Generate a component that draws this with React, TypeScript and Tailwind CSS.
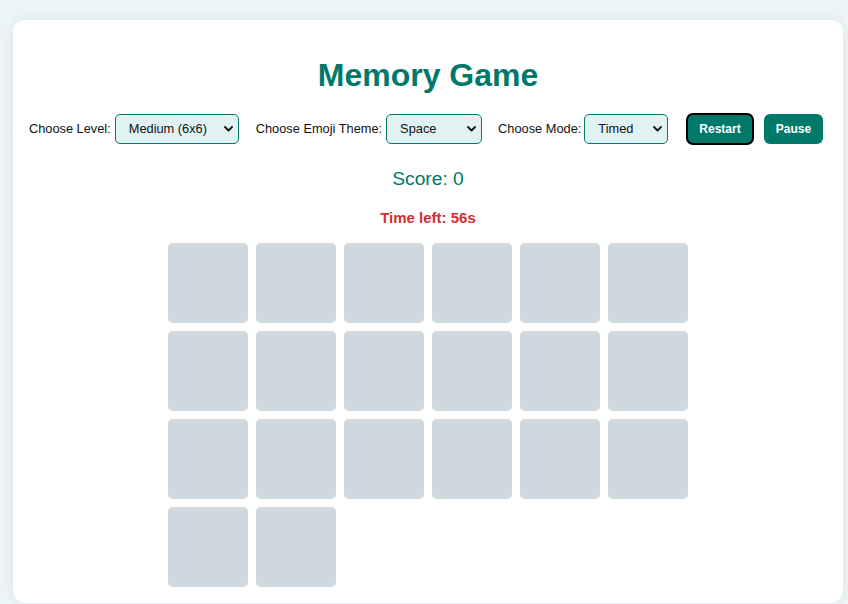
import { useState } from 'react';

const levels = ['Easy (4x4)', 'Medium (6x6)', 'Hard (8x8)'];
const themes = ['Animals', 'Food', 'Space', 'Faces'];
const modes = ['Classic', 'Timed'];

function Dropdown({ value, options, width, onChange }: { value: string; options: string[]; width: string; onChange: (v: string) => void }) {
  return (
    <div className={`relative ${width}`}>
      <select
        value={value}
        onChange={e => onChange(e.target.value)}
        className="h-[30px] w-full appearance-none rounded-[5px] border border-[#00796b] bg-[#e0f2f1] pl-[13px] pr-6 text-[12.8px] text-[#111] outline-none"
      >
        {options.map(o => (
          <option key={o} value={o}>{o}</option>
        ))}
      </select>
      <svg
        className="pointer-events-none absolute right-[6px] top-[12px]"
        width="9"
        height="6"
        viewBox="0 0 9 6"
        fill="none"
      >
        <path d="M1 1l3.5 3.5L8 1" stroke="#111" strokeWidth="1.8" strokeLinecap="round" strokeLinejoin="round" />
      </svg>
    </div>
  );
}

export default function App() {
  const [level, setLevel] = useState('Medium (6x6)');
  const [theme, setTheme] = useState('Space');
  const [mode, setMode] = useState('Timed');
  const cards = Array.from({ length: 20 }, (_, i) => i);

  return (
    <div className="h-[604px] overflow-hidden bg-[#edf4f8] pt-[20px] font-['Liberation_Sans',Arial,sans-serif]">
      <div className="ml-[13px] flex h-[583px] w-[830px] flex-col items-center rounded-[12px] bg-white pt-[37px] shadow-[0_0_12px_rgba(0,0,0,0.07)]">
        <h1 className="h-[37px] text-[32px] font-bold leading-[37px] text-[#00796b]">Memory Game</h1>

        <div className="mt-[19px] flex h-[32px] items-center pr-[4px] text-[12.8px] text-[#111]">
          <label className="mr-[4px]">Choose Level:</label>
          <Dropdown value={level} options={levels} width="w-[124px]" onChange={setLevel} />
          <label className="ml-[17px] mr-[4px]">Choose Emoji Theme:</label>
          <Dropdown value={theme} options={themes} width="w-[96px]" onChange={setTheme} />
          <label className="ml-[16px] mr-[3px]">Choose Mode:</label>
          <Dropdown value={mode} options={modes} width="w-[84px]" onChange={setMode} />
          <button className="ml-[19px] h-[30px] rounded-[6px] bg-[#00796b] px-[12px] text-[12px] font-bold text-white outline-2 outline-offset-[-1px] outline-black">
            Restart
          </button>
          <button className="ml-[11px] h-[30px] rounded-[6px] bg-[#00796b] px-[12px] text-[12px] font-bold text-white">
            Pause
          </button>
        </div>

        <div className="mt-[23px] h-[22px] text-[19.2px] leading-[22px] text-[#00796b]">Score: 0</div>
        <div className="mt-[19px] h-[17px] text-[15px] font-bold leading-[17px] text-[#d32f2f]">Time left: 56s</div>

        <div className="mt-[17px] grid grid-cols-[repeat(6,80px)] gap-[8px]">
          {cards.map(c => (
            <div key={c} className="h-[80px] w-[80px] rounded-[5px] bg-[#cfd8dc]" />
          ))}
        </div>
      </div>
    </div>
  );
}
